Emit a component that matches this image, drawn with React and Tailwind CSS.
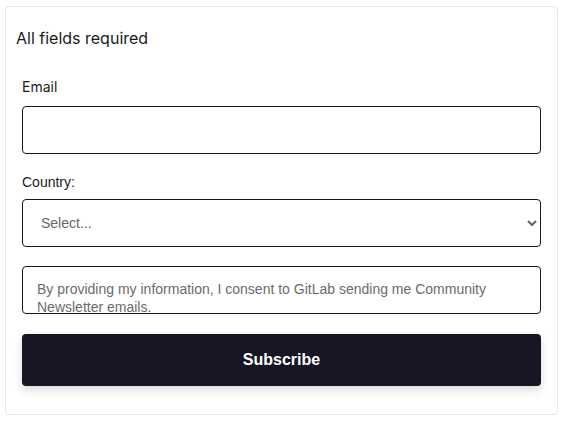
export default function App() {
  return (
    <div className="w-[567px] h-[424px] bg-white pt-[6px] pl-[5px]">
      <div
        className="w-[553px] h-[409px] border border-[#e6e6e6] rounded-[4px] bg-white"
        style={{ fontFamily: "Inter, 'Liberation Sans', sans-serif" }}
      >
        <h2 className="pl-[10px] pt-[20px] text-[16px] leading-[22px] text-[#1a1a1a] font-normal">
          All fields required
        </h2>
        <form className="px-[16px] pt-[28px]" onSubmit={(e) => e.preventDefault()}>
          <label className="block text-[14px] leading-[20px] text-[#1a1a1a]">
            Email
          </label>
          <input
            type="email"
            className="mt-[9px] block w-[519px] h-[48px] border border-[#181624] rounded-[4px] px-[15px] text-[14px] outline-none"
          />
          <label
            className="block mt-[18px] text-[14px] leading-[20px] text-[#1a1a1a]"
            style={{ fontFamily: "'Liberation Sans', Arial, sans-serif" }}
          >
            Country:
          </label>
          <select
            defaultValue=""
            className="mt-[7px] block w-[519px] h-[48px] border border-[#181624] rounded-[4px] pl-[14px] pr-[6px] text-[14px] text-[#666] bg-white outline-none"
            style={{ fontFamily: "'Liberation Sans', Arial, sans-serif" }}
          >
            <option value="">Select...</option>
          </select>
          <div
            className="mt-[19px] w-[519px] h-[48px] border border-[#181624] rounded-[4px] pl-[14px] pr-[12px] pt-[13px] overflow-hidden text-[14px] leading-[18px] text-[#6b6b6b]"
            style={{ fontFamily: "'Liberation Sans', Arial, sans-serif" }}
          >
            By providing my information, I consent to GitLab sending me Community Newsletter emails.
          </div>
          <button
            type="submit"
            className="mt-[20px] block w-[519px] h-[52px] rounded-[4px] bg-[#181624] text-white text-[16px] font-bold shadow-[0_4px_10px_rgba(0,0,0,0.15)]"
            style={{ fontFamily: "'Liberation Sans', Arial, sans-serif" }}
          >
            Subscribe
          </button>
        </form>
      </div>
    </div>
  );
}
